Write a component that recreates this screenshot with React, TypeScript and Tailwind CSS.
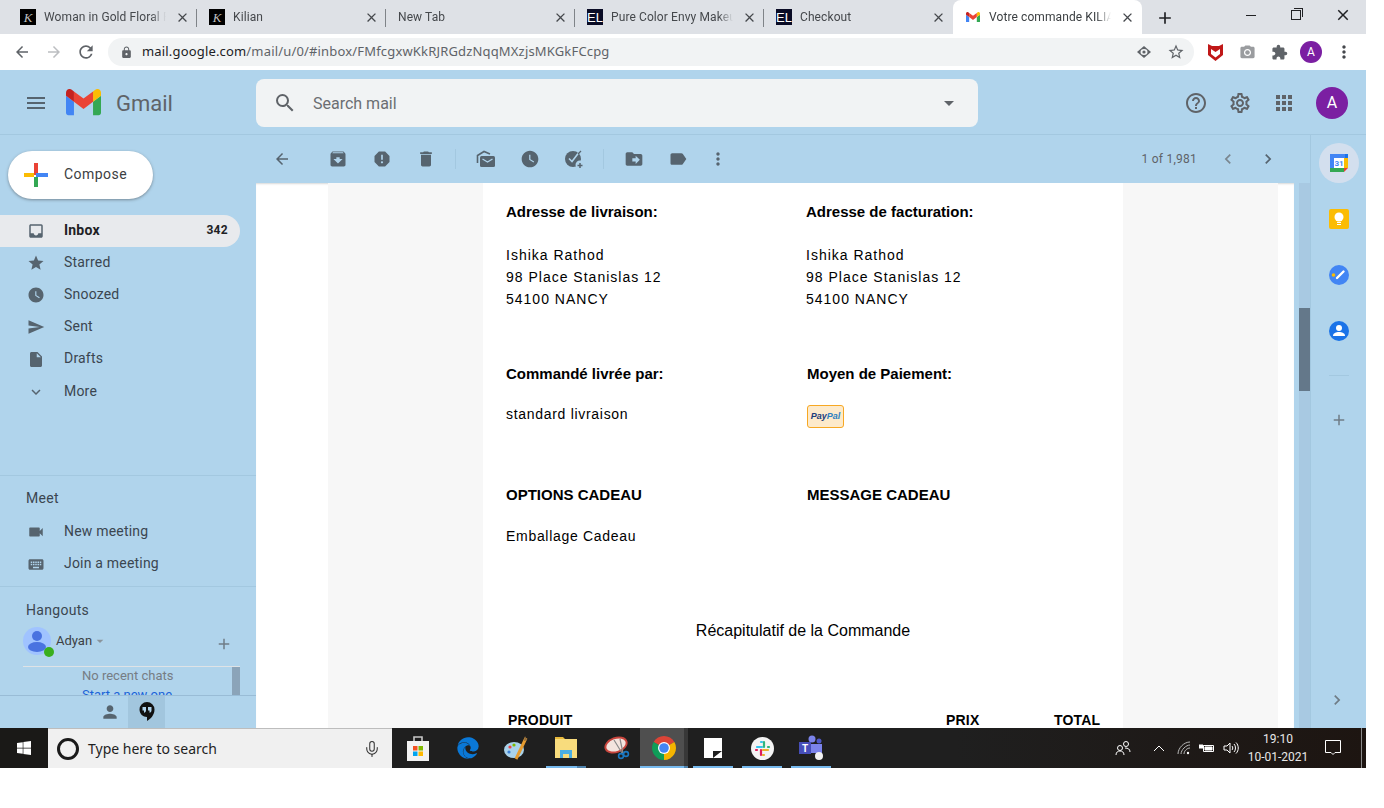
import type { ReactNode } from "react";
import {
  MdAdd,
  MdApps,
  MdArchive,
  MdArrowBack,
  MdArrowForward,
  MdChevronLeft,
  MdChevronRight,
  MdClose,
  MdDelete,
  MdDriveFileMove,
  MdExpandMore,
  MdExtension,
  MdHelpOutline,
  MdInbox,
  MdInsertDriveFile,
  MdKeyboard,
  MdLabel,
  MdLock,
  MdMenu,
  MdMoreVert,
  MdOutlineSettings,
  MdPerson,
  MdRefresh,
  MdReport,
  MdSearch,
  MdSend,
  MdStar,
  MdStarBorder,
  MdVideocam,
  MdWatchLater,
  MdArrowDropDown,
  MdPhotoCamera,
} from "react-icons/md";
import { FaEdge, FaWindows } from "react-icons/fa";
import { Mic } from "lucide-react";

function GmailLogo({ size }: { size: number }) {
  return (
    <svg width={size} height={(size * 66) / 88} viewBox="52 42 88 66">
      <path fill="#4285f4" d="M58 108h14V74L52 59v43c0 3.32 2.69 6 6 6" />
      <path fill="#34a853" d="M120 108h14c3.32 0 6-2.69 6-6V59l-20 15" />
      <path fill="#fbbc04" d="M120 48v26l20-15v-8c0-7.42-8.47-11.65-14.4-7.2" />
      <path fill="#ea4335" d="M72 74V48l24 18 24-18v26L96 92" />
      <path fill="#c5221f" d="M52 51v8l20 15V48l-5.6-4.2c-5.94-4.45-14.4-.22-14.4 7.2" />
    </svg>
  );
}

function ChromeLogo() {
  return (
    <svg width="24" height="24" viewBox="4 4 40 40">
      <path fill="#db4437" d="M6.68 14A20 20 0 0 1 41.32 14L24 24Z" />
      <path fill="#f4b400" d="M41.32 14A20 20 0 0 1 24 44L24 24Z" />
      <path fill="#0f9d58" d="M24 44A20 20 0 0 1 6.68 14L24 24Z" />
      <circle cx="24" cy="24" r="10" fill="#fff" />
      <circle cx="24" cy="24" r="8" fill="#4285f4" />
    </svg>
  );
}

function KilianIcon() {
  return (
    <span className="flex h-4 w-4 shrink-0 items-center justify-center bg-black font-['Liberation_Serif',serif] text-[13px] leading-none text-[#bdbdbd] italic">
      K
    </span>
  );
}

function ElIcon() {
  return (
    <span className="flex h-4 w-4 shrink-0 items-center justify-center bg-[#0a0c26] font-['Liberation_Sans',sans-serif] text-[13px] leading-none text-white">
      EL
    </span>
  );
}

function Tab({ icon, title, active, divider = true }: { icon?: ReactNode; title: string; active?: boolean; divider?: boolean }) {
  return (
    <div className={`relative flex h-[34px] w-[189px] shrink-0 items-center pl-3 ${active ? "rounded-t-lg bg-white" : ""}`}>
      {icon && <div className="mr-2 flex w-4 shrink-0 justify-center">{icon}</div>}
      <div
        className={`overflow-hidden font-['Roboto',sans-serif] text-xs tracking-[0.1px] whitespace-nowrap [mask-image:linear-gradient(90deg,#000_88%,transparent)] ${
          icon ? "w-[122px]" : "w-[146px]"
        } ${active ? "text-[#3c4043]" : "text-[#45484c]"}`}
      >
        {title}
      </div>
      <MdClose className="ml-[9px] shrink-0 text-[#45484c]" size={15} />
      {divider && <div className="absolute top-[9px] right-0 h-[18px] w-px bg-[#7f8388]" />}
    </div>
  );
}

function TabStrip() {
  return (
    <div className="flex h-[34px] shrink-0 bg-[#dee1e6] pl-2">
      <Tab icon={<KilianIcon />} title="Woman in Gold Floral Perfume" />
      <Tab icon={<KilianIcon />} title="Kilian" />
      <Tab title="New Tab" />
      <Tab icon={<ElIcon />} title="Pure Color Envy Makeup" />
      <Tab icon={<ElIcon />} title="Checkout" divider={false} />
      <Tab icon={<GmailLogo size={14} />} title="Votre commande KILIAN" active divider={false} />
      <MdAdd className="mt-[8px] ml-[13px] text-[#202124]" size={20} />
      <div className="ml-[71px] flex h-[30px] items-center text-[#202124]">
        <div className="h-px w-[10px] bg-[#202124]" />
        <div className="relative ml-[35px] h-[10px] w-[10px] border border-[#202124]">
          <div className="absolute -top-[3px] -right-[3px] h-[9px] w-[9px] border-t border-r border-[#202124]" />
        </div>
        <MdClose className="ml-[33px] font-light" size={18} />
      </div>
    </div>
  );
}

function AddressBar() {
  return (
    <div className="flex h-9 shrink-0 items-center bg-white">
      <MdArrowBack className="ml-[13px] text-[#5f6368]" size={18} />
      <MdArrowForward className="ml-[14px] text-[#bcbec1]" size={18} />
      <MdRefresh className="ml-[13px] text-[#5f6368]" size={20} />
      <div className="ml-3 flex h-7 w-[1086px] items-center rounded-full bg-[#f1f3f4] pl-[12px]">
        <MdLock className="text-[#5f6368]" size={13} />
        <span className="ml-[9px] font-['Noto_Sans',sans-serif] text-[13px] tracking-[0.17px] text-[#5f6368]">
          <span className="text-[#202124]">mail.google.com</span>/mail/u/0/#inbox/FMfcgxwKkRJRGdzNqqMXzjsMKGkFCcpg
        </span>
        <div className="flex-1" />
        <svg width="14" height="14" viewBox="0 0 14 14">
          <path fill="#5f6368" d="M7 1l7 6-7 6-7-6z" />
          <ellipse cx="7" cy="7" rx="3.5" ry="3" fill="#f1f3f4" />
          <circle cx="7" cy="7" r="1.6" fill="#5f6368" />
        </svg>
        <MdStarBorder className="mr-[9px] ml-[16px] text-[#5f6368]" size={18} />
      </div>
      <svg className="ml-[14px]" width="15" height="18" viewBox="0 0 15 18">
        <path fill="#c01818" d="M0 1l4 2h7l4-2v11l-7.500 6L0 12z" />
        <path fill="#fff" d="M3 6l4.500 3L12 6v5l-4.500 3.500L3 11z" />
      </svg>
      <MdPhotoCamera className="ml-[16px] text-[#9a9c9f]" size={17} />
      <MdExtension className="ml-[15px] text-[#5f6368]" size={17} />
      <div className="ml-[12px] flex h-[22px] w-[22px] items-center justify-center rounded-full bg-[#7b1fa2] font-['Roboto',sans-serif] text-xs text-white">
        A
      </div>
      <MdMoreVert className="ml-[12px] text-[#45484c]" size={20} />
    </div>
  );
}

function GmailHeader() {
  return (
    <div className="flex h-[65px] shrink-0 items-center border-b border-[#a3c8e0] pt-px">
      <div className="flex w-[256px] shrink-0 items-center">
        <MdMenu className="ml-[24px] text-[#56646f]" size={24} />
        <div className="ml-[18px]">
          <GmailLogo size={35} />
        </div>
        <span className="ml-[15px] translate-y-px font-['Roboto',sans-serif] text-[22px] text-[#5f6368]">Gmail</span>
      </div>
      <div className="flex h-12 w-[722px] items-center rounded-lg bg-[#f1f3f4] pl-[17px]">
        <MdSearch className="text-[#5f6368]" size={24} />
        <span className="ml-[16px] translate-y-px font-['Roboto',sans-serif] text-base text-[#6b6e72]">Search mail</span>
        <div className="flex-1" />
        <MdArrowDropDown className="mr-[17px] text-[#5f6368]" size={24} />
      </div>
      <MdHelpOutline className="ml-[206px] text-[#5f6368]" size={24} />
      <MdOutlineSettings className="ml-[20px] text-[#5f6368]" size={24} />
      <MdApps className="ml-[20px] text-[#5f6368]" size={24} />
      <div className="ml-[20px] flex h-8 w-8 items-center justify-center rounded-full bg-[#7b1fa2] font-['Roboto',sans-serif] text-base text-white">
        A
      </div>
    </div>
  );
}

function Compose() {
  return (
    <div className="ml-2 flex h-12 w-[145px] items-center rounded-full bg-white pl-4 shadow-[0_1px_3px_rgba(60,64,67,.5)]">
      <svg width="24" height="24" viewBox="0 0 24 24">
        <path fill="#fbbc04" d="M0 10h10v4H0z" />
        <path fill="#4285f4" d="M14 10h10v4H14z" />
        <path fill="#ea4335" d="M10 0h4v12h-4z" />
        <path fill="#34a853" d="M10 14h4v10h-4z" />
        <path fill="#4285f4" d="M12 10h2v4h-2z" />
      </svg>
      <span className="ml-4 -translate-y-px font-['Roboto',sans-serif] text-sm tracking-[0.45px] text-[#3c4043]">Compose</span>
    </div>
  );
}

function NavRow({ icon, label, count, active }: { icon: ReactNode; label: string; count?: string; active?: boolean }) {
  return (
    <div className={`flex h-8 w-[240px] items-center rounded-r-full pr-3 pl-[27px] ${active ? "bg-[#e8eaed]" : ""}`}>
      <div className="flex w-[18px] justify-center text-[#56646f]">{icon}</div>
      <span className={`ml-[19px] flex-1 -translate-y-px text-sm tracking-[0.2px] ${active ? "font-bold text-[#202124]" : "text-[#3b4650]"}`}>
        {label}
      </span>
      {count && <span className="-translate-y-px text-xs font-bold tracking-[0.3px] text-[#202124]">{count}</span>}
    </div>
  );
}

function Sidebar() {
  return (
    <div className="flex w-[256px] shrink-0 flex-col font-['Roboto',sans-serif]">
      <div className="pt-4">
        <Compose />
      </div>
      <div className="mt-4">
        <NavRow active icon={<MdInbox size={22} />} label="Inbox" count="342" />
        <NavRow icon={<MdStar size={20} />} label="Starred" />
        <NavRow icon={<MdWatchLater size={20} />} label="Snoozed" />
        <NavRow icon={<MdSend size={20} />} label="Sent" />
        <NavRow icon={<MdInsertDriveFile size={21} />} label="Drafts" />
        <div className="mt-px">
          <NavRow icon={<MdExpandMore size={18} />} label="More" />
        </div>
      </div>
      <div className="mt-[67px] h-[112px] border-t border-[#a3c8e0]">
        <div className="mt-[12px] ml-[26px] text-sm leading-5 tracking-[0.3px] text-[#3b4650]">Meet</div>
        <div className="mt-[8px]">
          <NavRow icon={<MdVideocam size={20} />} label="New meeting" />
          <NavRow icon={<MdKeyboard size={21} />} label="Join a meeting" />
        </div>
      </div>
      <div className="flex flex-1 flex-col border-t border-[#a3c8e0]">
        <div className="mt-[13px] ml-[26px] text-sm leading-5 tracking-[0.3px] text-[#3b4650]">Hangouts</div>
        <div className="mt-[7px] flex h-7 items-center pl-[23px]">
          <div className="relative flex h-7 w-7 items-center justify-center rounded-full bg-[#a0c3ff]">
            <svg width="20" height="24" viewBox="0 0 20 24">
              <circle cx="10" cy="7" r="5" fill="#4a73e0" />
              <ellipse cx="10" cy="18" rx="9" ry="5" fill="#4a73e0" />
            </svg>
            <div className="absolute -right-[3px] -bottom-[2px] h-[10px] w-[10px] rounded-full bg-[#3aaf1d]" />
          </div>
          <span className="ml-[5px] text-[13px] text-[#3c4043]">Adyan</span>
          <MdArrowDropDown className="text-[#8a949c]" size={16} />
          <div className="flex-1" />
          <MdAdd className="mt-[5px] mr-[23px] text-[#6f7c86]" size={18} />
        </div>
        <div className="mt-[11px] ml-[23px] flex h-[29px] w-[217px] overflow-hidden border-t border-[#dfe3e6]">
          <div className="flex-1 pl-[59px] text-[13px] leading-[17px]">
            <div className="text-[#767d84]">No recent chats</div>
            <div className="mt-[2px] text-[#1a63d8]">Start a new one</div>
          </div>
          <div className="h-full w-2 bg-[#8ba4b9]" />
        </div>
        <div className="flex h-[33px] items-stretch border-t border-[#99bcd6] pl-[92px]">
          <div className="flex w-9 items-center justify-center text-[#56646f]">
            <MdPerson size={20} />
          </div>
          <div className="flex w-[37px] items-center justify-center bg-[#a2c6de]">
            <svg width="16" height="20" viewBox="0 0 16 20">
              <path fill="#111" d="M8 0a7.500 7.500 0 0 0-7.500 7.500C.5 12 4 15 8 15v4c3-1.600 7.500-5.500 7.500-11.500A7.500 7.500 0 0 0 8 0z" />
              <path fill="#b0d4ec" d="M3.500 5h3.500v3.200c0 1.400-.8 2.400-2 2.600v-2.300h-1.500zM9 5h3.500v3.200c0 1.400-.8 2.400-2 2.600v-2.300H9z" />
            </svg>
          </div>
        </div>
      </div>
    </div>
  );
}

function MarkUnreadIcon() {
  return (
    <svg width="20" height="20" viewBox="0 0 20 20">
      <path d="M1.500 14V6.500L8 2.500l6 2.500" fill="none" stroke="#56646f" strokeWidth="1.600" />
      <rect x="4" y="7" width="15" height="11" rx="1.500" fill="#56646f" />
      <path d="M6.500 10l5 3 5-3" fill="none" stroke="#b0d4ec" strokeWidth="1.300" />
    </svg>
  );
}

function AddTaskIcon() {
  return (
    <svg width="20" height="20" viewBox="0 0 20 20">
      <circle cx="9" cy="10" r="8" fill="#56646f" />
      <path d="M5 9.500l3 3 6.500-8.500" fill="none" stroke="#b0d4ec" strokeWidth="1.600" />
      <path d="M14 5l3-3" stroke="#56646f" strokeWidth="1.300" />
      <circle cx="16" cy="16" r="4.500" fill="#b0d4ec" />
      <path d="M13.500 16.500h5M16 14v5" stroke="#56646f" strokeWidth="1.500" />
    </svg>
  );
}

function MailToolbar() {
  return (
    <div className="flex h-12 shrink-0 items-center text-[#56646f]">
      <MdArrowBack className="ml-[17px]" size={18} />
      <MdArchive className="ml-[37px]" size={20} />
      <MdReport className="ml-[24px]" size={20} />
      <MdDelete className="ml-[24px]" size={20} />
      <div className="ml-[19px] h-5 w-px bg-[#a3c8e0]" />
      <div className="ml-[20px]">
        <MarkUnreadIcon />
      </div>
      <MdWatchLater className="ml-[24px]" size={20} />
      <div className="ml-[24px]">
        <AddTaskIcon />
      </div>
      <div className="ml-[19px] h-5 w-px bg-[#a3c8e0]" />
      <MdDriveFileMove className="ml-[20px]" size={20} />
      <MdLabel className="ml-[24px]" size={20} />
      <MdMoreVert className="ml-[20px]" size={20} />
      <div className="flex-1" />
      <span className="font-['Roboto',sans-serif] text-xs tracking-[0.25px] text-[#5f6368]">1 of 1,981</span>
      <MdChevronLeft className="ml-[21px] text-[#7a868f]" size={20} />
      <MdChevronRight className="mr-[32px] ml-[20px]" size={20} />
    </div>
  );
}

function Label({ children }: { children: ReactNode }) {
  return <div className="text-[15px] leading-[22px] font-bold text-black">{children}</div>;
}

function ColumnHead({ children }: { children: ReactNode }) {
  return <div className="text-sm leading-[22px] font-bold tracking-[0.2px] text-black">{children}</div>;
}

function Address({ children }: { children: ReactNode }) {
  return <div className="text-sm leading-[22px] tracking-[1px] text-black">{children}</div>;
}

function Value({ children }: { children: ReactNode }) {
  return <div className="text-sm leading-[22px] tracking-[0.7px] text-black">{children}</div>;
}

function PayPalBadge() {
  return (
    <div className="flex h-[23px] w-[37px] items-center justify-center rounded-[3px] border-[1.5px] border-[#f7a823] bg-[#fdeacb] text-[9px] leading-none font-bold italic">
      <span className="text-[#1b3d7c]">Pay</span>
      <span className="text-[#2e7fc0]">Pal</span>
    </div>
  );
}

function MailBody() {
  return (
    <div className="flex-1 overflow-hidden bg-white pr-4 pl-[72px] shadow-[inset_0_2px_2px_-1px_rgba(60,64,67,.2)]">
      <div className="h-[545px] overflow-hidden bg-[#f7f7f7] px-[155px] font-['Liberation_Sans',Arial,sans-serif]">
        <div className="h-full bg-white pt-[18px] pl-[23px]">
          <div className="grid grid-cols-[300px_1fr]">
            <Label>Adresse de livraison:</Label>
            <Label>Adresse de facturation:</Label>
          </div>
          <div className="mt-[21px] grid grid-cols-[300px_1fr]">
            <div>
              <Address>Ishika Rathod</Address>
              <Address>98 Place Stanislas 12</Address>
              <Address>54100 NANCY</Address>
            </div>
            <div>
              <Address>Ishika Rathod</Address>
              <Address>98 Place Stanislas 12</Address>
              <Address>54100 NANCY</Address>
            </div>
          </div>
          <div className="mt-[53px] grid grid-cols-[301px_1fr]">
            <Label>Commandé livrée par:</Label>
            <Label>Moyen de Paiement:</Label>
          </div>
          <div className="mt-[18px] grid h-[81px] grid-cols-[301px_1fr]">
            <Value>standard livraison</Value>
            <div className="pt-[2px]">
              <PayPalBadge />
            </div>
          </div>
          <div className="grid grid-cols-[301px_1fr]">
            <Label>OPTIONS CADEAU</Label>
            <Label>MESSAGE CADEAU</Label>
          </div>
          <div className="mt-[19px]">
            <Value>Emballage Cadeau</Value>
          </div>
          <div className="mt-[73px] pr-[23px] text-center text-base leading-[22px] text-black">Récapitulatif de la Commande</div>
          <div className="mt-[67px] flex pl-[2px]">
            <div className="w-[438px]">
              <ColumnHead>PRODUIT</ColumnHead>
            </div>
            <div className="w-[108px]">
              <ColumnHead>PRIX</ColumnHead>
            </div>
            <ColumnHead>TOTAL</ColumnHead>
          </div>
        </div>
      </div>
    </div>
  );
}

function SidePanel() {
  return (
    <div className="flex w-[56px] shrink-0 flex-col items-center border-l border-[#a3c8e0]">
      <div className="mt-2 flex h-10 w-10 items-center justify-center rounded-full bg-[#d3dfee]">
        <svg width="20" height="20" viewBox="0 0 20 20">
          <path fill="#4285f4" d="M1 1h15v4H5v10H1z" />
          <path fill="#1a73e8" d="M16 1h3v4h-3z" />
          <path fill="#fbbc04" d="M15 5h4v10h-4z" />
          <path fill="#34a853" d="M1 15h14v4H1z" />
          <path fill="#ea4335" d="M15 15h4l-4 4z" />
          <path fill="#fff" d="M5 5h10v10H5z" />
          <text x="10" y="13" textAnchor="middle" fontSize="8" fontWeight="700" fill="#4285f4" fontFamily="Roboto, sans-serif">
            31
          </text>
        </svg>
      </div>
      <div className="mt-[26px] flex h-5 w-5 items-center justify-center rounded-[2px] bg-[#fbbc04]">
        <svg width="10" height="14" viewBox="0 0 10 14">
          <circle cx="5" cy="5" r="4.500" fill="#fff" />
          <path fill="#fff" d="M3 10h4v1H3zM3 12h4v1H3z" />
        </svg>
      </div>
      <div className="mt-9">
        <svg width="20" height="20" viewBox="0 0 20 20">
          <circle cx="10" cy="10" r="10" fill="#4285f4" />
          <circle cx="4.500" cy="10" r="1.800" fill="#fbbc04" />
          <path d="M8 13l6.500-6.500" stroke="#fff" strokeWidth="2.400" strokeLinecap="round" />
        </svg>
      </div>
      <div className="mt-9">
        <svg width="20" height="20" viewBox="0 0 20 20">
          <circle cx="10" cy="10" r="10" fill="#1a73e8" />
          <circle cx="10" cy="7" r="3" fill="#fff" />
          <path fill="#fff" d="M4 15c0-3 3-4 6-4s6 1 6 4z" />
        </svg>
      </div>
      <div className="mt-[34px] h-px w-5 bg-[#a3c8e0]" />
      <MdAdd className="mt-[35px] text-[#6f7c86]" size={18} />
      <div className="flex-1" />
      <MdChevronRight className="mr-[4px] mb-[18px] text-[#6f7c86]" size={20} />
    </div>
  );
}

function Scrollbar() {
  return (
    <div className="ml-[5px] w-[11px] shrink-0 bg-[#a8c9e2] pt-[125px]">
      <div className="h-[83px] bg-[#64788a]" />
    </div>
  );
}

function StoreIcon() {
  return (
    <svg width="24" height="26" viewBox="0 0 24 26">
      <path d="M8 6V2h8v4" fill="none" stroke="#c8c8c8" strokeWidth="1.600" />
      <path fill="#f2f2f2" d="M1 6h22v20H1z" />
      <path fill="#f25022" d="M7 11h4.500v4.500H7z" />
      <path fill="#7fba00" d="M12.500 11H17v4.500h-4.500z" />
      <path fill="#00a4ef" d="M7 16.500h4.500V21H7z" />
      <path fill="#ffb900" d="M12.500 16.500H17V21h-4.500z" />
    </svg>
  );
}

function PaintIcon() {
  return (
    <svg width="26" height="26" viewBox="0 0 26 26">
      <ellipse cx="11" cy="15" rx="10" ry="8" fill="#a9d2ea" />
      <circle cx="7" cy="12" r="1.600" fill="#e44" />
      <circle cx="11" cy="10" r="1.600" fill="#7fba00" />
      <circle cx="6" cy="17" r="1.600" fill="#3a7fd5" />
      <path d="M13 24L23 3" stroke="#e59b2f" strokeWidth="3" />
      <path d="M22 1l2 4-3 1z" fill="#8a6a3f" />
    </svg>
  );
}

function ExplorerIcon() {
  return (
    <svg width="22" height="22" viewBox="0 0 22 22">
      <path fill="#e8b93b" d="M0 0h8l2 2h-10z" />
      <path fill="#f8dc7d" d="M0 2h22v19H0z" />
      <path fill="#4aaee3" d="M5 13h12v8h-3v-4H8v4H5z" />
    </svg>
  );
}

function SnipIcon() {
  return (
    <svg width="26" height="26" viewBox="0 0 26 26">
      <ellipse cx="12" cy="10" rx="11" ry="7" fill="#f3e4de" stroke="#c8453d" strokeWidth="2" transform="rotate(-20 12 10)" />
      <path d="M10 5l8 13M16 4l3 14" stroke="#8a8a8a" strokeWidth="1.200" />
      <circle cx="17" cy="21" r="2.400" fill="none" stroke="#1a78c2" strokeWidth="1.600" />
      <circle cx="22" cy="19" r="2.400" fill="none" stroke="#1a78c2" strokeWidth="1.600" />
    </svg>
  );
}

function StickyIcon() {
  return (
    <svg width="18" height="20" viewBox="0 0 18 20">
      <path fill="#fff" d="M0 0h18v20H0z" />
      <path fill="#1f1f1f" d="M9 20V13h9z" />
      <path fill="#fff" d="M11 19l5-4v4z" />
    </svg>
  );
}

function SlackIcon() {
  return (
    <svg width="23" height="23" viewBox="0 0 23 23">
      <circle cx="11.500" cy="11.500" r="11.500" fill="#f4f4f4" />
      <path d="M6 10h5M10 5h1" stroke="#36c5f0" strokeWidth="2.200" strokeLinecap="round" />
      <path d="M13 5v5M17 10h1" stroke="#2eb67d" strokeWidth="2.200" strokeLinecap="round" />
      <path d="M12 13h5M12 18h1" stroke="#ecb22e" strokeWidth="2.200" strokeLinecap="round" />
      <path d="M10 13v5M5 13h1" stroke="#e01e5a" strokeWidth="2.200" strokeLinecap="round" />
    </svg>
  );
}

function TeamsIcon() {
  return (
    <svg width="24" height="26" viewBox="0 0 24 26">
      <circle cx="13" cy="4" r="3.500" fill="#7b83eb" />
      <circle cx="20" cy="6" r="2.500" fill="#5059c9" />
      <path fill="#7b83eb" d="M9 9h14v9H9z" />
      <path fill="#464eb8" d="M0 7h12v12H0z" />
      <text x="6" y="17" textAnchor="middle" fontSize="10" fontWeight="700" fill="#fff" fontFamily="Roboto, sans-serif">
        T
      </text>
      <circle cx="20" cy="21" r="4" fill="#f2f2f2" />
    </svg>
  );
}

function TaskButton({ children, width, bar, bg }: { children: ReactNode; width: number; bar?: string; bg?: string }) {
  return (
    <div className={`relative flex h-10 shrink-0 items-center justify-center ${bg ?? ""}`} style={{ width }}>
      {children}
      {bar && <div className={`absolute bottom-0 left-1/2 h-[2px] -translate-x-1/2 ${bar}`} />}
    </div>
  );
}

function Taskbar() {
  return (
    <div className="flex h-10 shrink-0 items-center bg-[linear-gradient(90deg,#1f1f1f_70%,#1d1511_100%)] text-white">
      <div className="flex h-10 w-12 items-center justify-center bg-[#1a1917]">
        <FaWindows size={16} />
      </div>
      <div className="flex h-10 w-[344px] items-center border-t border-[#bdbdbd] bg-[#f0f0f0] pl-[9px] text-[#1f1f1f]">
        <div className="h-[22px] w-[22px] rounded-full border-[3px] border-[#1a1a1a]" />
        <span className="ml-[9px] font-['Noto_Sans',sans-serif] text-sm">Type here to search</span>
        <div className="flex-1" />
        <Mic className="mr-[11px] text-[#333]" size={18} strokeWidth={1.4} />
      </div>
      <div className="ml-[2px] flex items-center">
        <TaskButton width={48}>
          <StoreIcon />
        </TaskButton>
        <TaskButton width={52}>
          <FaEdge className="text-[#0a78d7]" size={22} />
        </TaskButton>
        <TaskButton width={44}>
          <PaintIcon />
        </TaskButton>
        <TaskButton width={56} bar="w-10 bg-[linear-gradient(90deg,#76b9ed_78%,#4f83ad_78%)]">
          <ExplorerIcon />
        </TaskButton>
        <TaskButton width={46}>
          <SnipIcon />
        </TaskButton>
        <TaskButton
          width={48}
          bg="bg-[linear-gradient(90deg,#4f4f4f_92%,#383838_92%)]"
          bar="w-12 bg-[linear-gradient(90deg,#76b9ed_92%,#4f83ad_92%)]"
        >
          <ChromeLogo />
        </TaskButton>
        <TaskButton width={50} bar="w-10 bg-[#76b9ed]">
          <StickyIcon />
        </TaskButton>
        <TaskButton width={48} bar="w-10 bg-[#76b9ed]">
          <SlackIcon />
        </TaskButton>
        <TaskButton width={50} bar="w-10 bg-[#76b9ed]">
          <TeamsIcon />
        </TaskButton>
      </div>
      <div className="flex-1" />
      <svg width="16" height="16" viewBox="0 0 16 16" fill="none" stroke="#fff">
        <circle cx="5" cy="8" r="2.500" />
        <path d="M1 15c0-3 2-4 4-4s4 1 4 4" />
        <circle cx="11" cy="4" r="2.500" />
        <path d="M10 8c3 0 5 1 5 4" />
      </svg>
      <svg className="ml-[22px]" width="12" height="8" viewBox="0 0 12 8" fill="none" stroke="#fff">
        <path d="M1 7l5-5 5 5" />
      </svg>
      <svg className="ml-[12px]" width="14" height="14" viewBox="0 0 14 14" fill="none" stroke="#bbb">
        <path d="M1 13C1 7 7 1 13 1M4 13c0-4 5-9 9-9M7 13c0-3 3-6 6-6" />
        <circle cx="11" cy="12" r="1.200" fill="#fff" stroke="none" />
      </svg>
      <svg className="ml-[8px]" width="16" height="12" viewBox="0 0 16 12" fill="none" stroke="#fff">
        <path d="M4.500 3.500h10v6h-10z" />
        <path fill="#fff" d="M6 5h7v3H6zM0 3h4v3H0z" />
      </svg>
      <svg className="ml-[8px]" width="16" height="14" viewBox="0 0 16 14" fill="none" stroke="#fff">
        <path d="M1 5h3l3-3v10l-3-3H1z" />
        <path d="M9 5c1 1 1 3 0 4M11 3c2 2 2 6 0 8M13 1.500c3 3 3 8 0 11" />
      </svg>
      <div className="ml-[6px] flex w-[66px] flex-col items-center font-['Roboto',sans-serif] text-xs leading-[18px] whitespace-nowrap text-[#e8e8e8]">
        <span>19:10</span>
        <span>10-01-2021</span>
      </div>
      <svg className="ml-[14px]" width="16" height="16" viewBox="0 0 16 16" fill="none" stroke="#fff">
        <path d="M.5.5h15v12H10l-2 2-2-2H.5z" />
      </svg>
      <div className="ml-[20px] h-10 w-px bg-[#8a8a8a]" />
      <div className="w-1" />
    </div>
  );
}

export default function App() {
  return (
    <div className="h-[808px] w-[1384px] bg-white">
      <div className="flex h-[768px] w-[1366px] flex-col overflow-hidden">
        <TabStrip />
        <AddressBar />
        <div className="flex min-h-0 flex-1 flex-col bg-[#b0d4ec]">
          <GmailHeader />
          <div className="flex min-h-0 flex-1">
            <Sidebar />
            <div className="flex min-w-0 flex-1 flex-col">
              <MailToolbar />
              <div className="flex min-h-0 flex-1">
                <MailBody />
                <Scrollbar />
              </div>
            </div>
            <SidePanel />
          </div>
        </div>
        <Taskbar />
      </div>
    </div>
  );
}
